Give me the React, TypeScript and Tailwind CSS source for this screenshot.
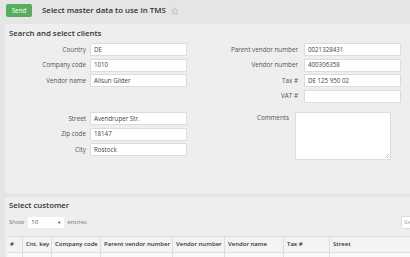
import React from 'react';

const leftTop = [
  { label: 'Country', value: 'DE' },
  { label: 'Company code', value: '1010' },
  { label: 'Vendor name', value: 'Ailsun Gilder' },
];

const rightTop = [
  { label: 'Parent vendor number', value: '0021328431' },
  { label: 'Vendor number', value: '400306358' },
  { label: 'Tax #', value: 'DE 125 950 02' },
  { label: 'VAT #', value: '' },
];

const address = [
  { label: 'Street', value: 'Avendruper Str.' },
  { label: 'Zip code', value: '18147' },
  { label: 'City', value: 'Rostock' },
];

const columns = [
  { label: '#', w: 'w-[16px]' },
  { label: 'Cnt. key', w: 'w-[29px]' },
  { label: 'Company code', w: 'w-[49px]' },
  { label: 'Parent vendor number', w: 'w-[72px]' },
  { label: 'Vendor number', w: 'w-[52px]' },
  { label: 'Vendor name', w: 'w-[59px]' },
  { label: 'Tax #', w: 'w-[46px]' },
  { label: 'Street', w: 'w-[120px]' },
];

const Field = ({ label, value, labelW, gap }: { label: string; value: string; labelW: string; gap: string }) => (
  <div className="flex items-center h-[13px]">
    <span className={`${labelW} text-right text-[6.3px] text-[#555] shrink-0`}>{label}</span>
    <div className={`${gap} w-[97px] h-[13px] bg-white border border-[#dcdcdc] rounded-[1px] flex items-center px-[3px] text-[6.2px] text-[#444]`}>
      {value}
    </div>
  </div>
);

export default function App() {
  return (
    <div className="w-[410px] h-[257px] overflow-hidden bg-[#e5e5e5] font-['Open_Sans',sans-serif]">
      {/* Top bar */}
      <div className="h-[24px] flex items-center pl-[6px] pb-[3px]">
        <button className="w-[26px] h-[13px] bg-[#57ad5b] rounded-[2px] text-white text-[6.3px] flex items-center justify-center">
          Send
        </button>
        <h1 className="ml-[10px] text-[7.9px] font-semibold text-[#333]">Select master data to use in TMS</h1>
        <svg className="ml-[5px]" width="8" height="8" viewBox="0 0 24 24" fill="none" stroke="#aaa" strokeWidth="1.6">
          <polygon points="12,2 15,9 22,9.5 16.5,14 18.5,21.5 12,17.5 5.5,21.5 7.5,14 2,9.5 9,9" />
        </svg>
      </div>

      {/* Search and select clients */}
      <div className="ml-[5px] h-[169px] bg-[#eeeeee]">
        <h2 className="pl-[4px] pt-[3px] leading-[12px] text-[7.8px] font-semibold text-[#333]">Search and select clients</h2>
        <div className="flex mt-[4px]">
          <div className="flex flex-col gap-[2.5px]">
            {leftTop.map((f) => (
              <Field key={f.label} {...f} labelW="w-[81px]" gap="ml-[4px]" />
            ))}
          </div>
          <div className="flex flex-col gap-[2.5px]">
            {rightTop.map((f) => (
              <Field key={f.label} {...f} labelW="w-[111px]" gap="ml-[6px]" />
            ))}
          </div>
        </div>
        <div className="flex mt-[9.5px]">
          <div className="flex flex-col gap-[2.5px]">
            {address.map((f) => (
              <Field key={f.label} {...f} labelW="w-[81px]" gap="ml-[4px]" />
            ))}
          </div>
          <div className="flex items-start">
            <span className="w-[102px] text-right text-[6.3px] text-[#555] pt-[1px]">Comments</span>
            <div className="ml-[6px] w-[96px] h-[48px] bg-white border border-[#dcdcdc] rounded-[1px] relative">
              <svg className="absolute right-[1px] bottom-[1px]" width="4" height="4" viewBox="0 0 4 4" stroke="#999" strokeWidth="0.5">
                <line x1="0" y1="4" x2="4" y2="0" />
                <line x1="2" y1="4" x2="4" y2="2" />
              </svg>
            </div>
          </div>
        </div>
      </div>

      {/* Select customer */}
      <div className="ml-[5px] mt-[4px] h-[60px] bg-[#eeeeee]">
        <h2 className="pl-[4px] pt-[2px] leading-[12px] text-[7.8px] font-semibold text-[#333]">Select customer</h2>
        <div className="flex items-center mt-[5px]">
          <div className="w-[396px] shrink-0 flex items-center pl-[4px] text-[6px] text-[#777]">
            <span>Show</span>
            <div className="ml-[4px] w-[36px] h-[11px] bg-white rounded-[1px] flex items-center justify-between px-[3px] text-[#444]">
              <span>10</span>
              <span className="text-[4px] text-[#333]">▼</span>
            </div>
            <span className="ml-[3px]">entries</span>
          </div>
          <div className="w-[60px] h-[13px] shrink-0 bg-white border border-[#dcdcdc] rounded-[2px] flex items-center px-[2px] text-[6px] text-[#aaa]">
            Search
          </div>
        </div>
        <div className="ml-[2px] mt-[7px] border-t border-[#dedede] bg-[#f3f3f3]">
          <div className="flex h-[16px] border-b border-[#dedede]">
            {columns.map((c, i) => (
              <div
                key={c.label}
                className={`${c.w} shrink-0 flex items-center pl-[3px] text-[6px] font-semibold text-[#333] ${i < columns.length - 1 ? 'border-r border-[#dedede]' : ''}`}
              >
                {c.label}
              </div>
            ))}
          </div>
          <div className="flex h-[10px] bg-[#fafafa]">
            {columns.map((c, i) => (
              <div key={c.label} className={`${c.w} shrink-0 ${i < columns.length - 1 ? 'border-r border-[#dedede]' : ''}`} />
            ))}
          </div>
        </div>
      </div>
    </div>
  );
}
